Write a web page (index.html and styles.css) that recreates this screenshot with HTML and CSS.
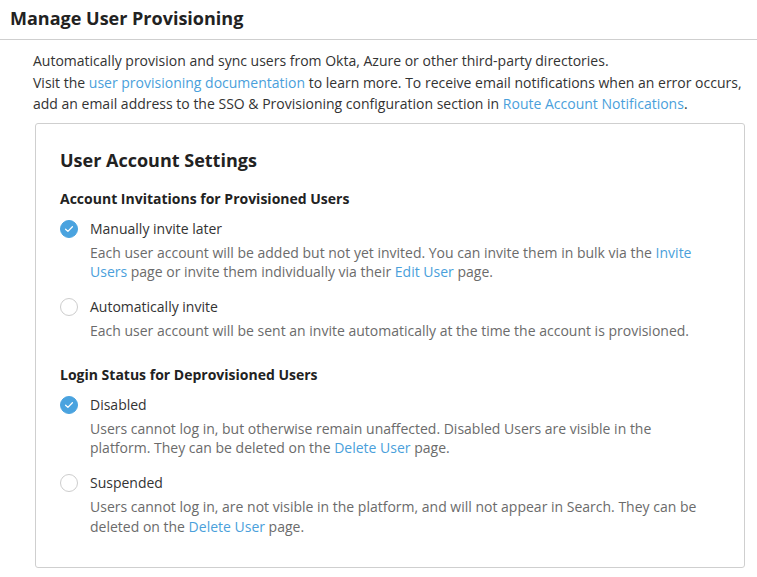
FILE: index.html
```html
<!DOCTYPE html>
<html>
<head>
<meta charset="utf-8">
<link rel="stylesheet" href="styles.css">
</head>
<body>
<header class="page-header"><h1>Manage User Provisioning</h1></header>
<div class="intro">
  <p>Automatically provision and sync users from Okta, Azure or other third-party directories.<br>
  Visit the <a href="#">user provisioning documentation</a> to learn more. To receive email notifications when an error occurs, add an email address to the SSO &amp; Provisioning configuration section in <a href="#">Route Account Notifications</a>.</p>
</div>
<section class="card">
  <h2>User Account Settings</h2>
  <h3>Account Invitations for Provisioned Users</h3>
  <div class="option">
    <span class="radio checked"><svg viewBox="0 0 18 18" width="18" height="18"><path d="M5.6 9.2 L7.9 11.4 L12.4 6.8" fill="none" stroke="#fff" stroke-width="1.3" stroke-linecap="round" stroke-linejoin="round"/></svg></span>
    <div class="option-body">
      <div class="label">Manually invite later</div>
      <div class="desc">Each user account will be added but not yet invited. You can invite them in bulk via the <a href="#">Invite Users</a> page or invite them individually via their <a href="#">Edit User</a> page.</div>
    </div>
  </div>
  <div class="option">
    <span class="radio"></span>
    <div class="option-body">
      <div class="label">Automatically invite</div>
      <div class="desc">Each user account will be sent an invite automatically at the time the account is provisioned.</div>
    </div>
  </div>
  <h3 class="second">Login Status for Deprovisioned Users</h3>
  <div class="option">
    <span class="radio checked"><svg viewBox="0 0 18 18" width="18" height="18"><path d="M5.6 9.2 L7.9 11.4 L12.4 6.8" fill="none" stroke="#fff" stroke-width="1.3" stroke-linecap="round" stroke-linejoin="round"/></svg></span>
    <div class="option-body">
      <div class="label">Disabled</div>
      <div class="desc">Users cannot log in, but otherwise remain unaffected. Disabled Users are visible in the platform. They can be deleted on the <a href="#">Delete User</a> page.</div>
    </div>
  </div>
  <div class="option">
    <span class="radio"></span>
    <div class="option-body">
      <div class="label">Suspended</div>
      <div class="desc">Users cannot log in, are not visible in the platform, and will not appear in Search. They can be deleted on the <a href="#">Delete User</a> page.</div>
    </div>
  </div>
</section>
</body>
</html>
```
FILE: styles.css
```css
html, body {
  margin: 0;
  padding: 0;
  background: #fff;
}
body {
  font-family: "Open Sans", "Liberation Sans", sans-serif;
  font-size: 14px;
  color: #333;
}
a {
  color: #4a9fdb;
  text-decoration: none;
}
.page-header {
  height: 40px;
  border-bottom: 1px solid #cfcfcf;
  box-sizing: border-box;
  padding-left: 10px;
  display: flex;
  align-items: center;
}
.page-header h1 {
  margin: 0;
  font-size: 18px;
  font-weight: 700;
  color: #222;
  line-height: 24px;
  position: relative;
  top: -2px;
}
.intro {
  padding: 10px 12px 0 33px;
}
.intro p {
  margin: 0;
  line-height: 21.5px;
}
.card {
  margin: 8px 12px 0 35px;
  border: 1px solid #cfcfcf;
  border-radius: 3px;
  padding: 23px 24px 31px 24px;
}
.card h2 {
  margin: 0;
  font-size: 18px;
  font-weight: 700;
  color: #222;
  line-height: 26px;
}
.card h3 {
  margin: 16px 0 10px;
  font-size: 14px;
  font-weight: 700;
  color: #222;
  line-height: 20px;
}
.card h3.second {
  margin-top: 24.5px;
  margin-bottom: 9.5px;
}
.option {
  display: flex;
  gap: 12px;
}
.option + .option {
  margin-top: 15.5px;
}
.radio {
  flex: none;
  width: 18px;
  height: 18px;
  box-sizing: border-box;
  border: 1px solid #cdcdcd;
  border-radius: 50%;
  background: #fff;
  margin-top: 1px;
  display: flex;
}
.radio.checked {
  background: #4aa3df;
  border-color: #4aa3df;
}
.radio svg {
  margin: -1px;
}
.option-body {
  flex: 1;
  padding-right: 14px;
}
.label {
  line-height: 20px;
  color: #333;
}
.desc {
  margin-top: 4px;
  line-height: 19.5px;
  color: #6b6b6b;
}
```
